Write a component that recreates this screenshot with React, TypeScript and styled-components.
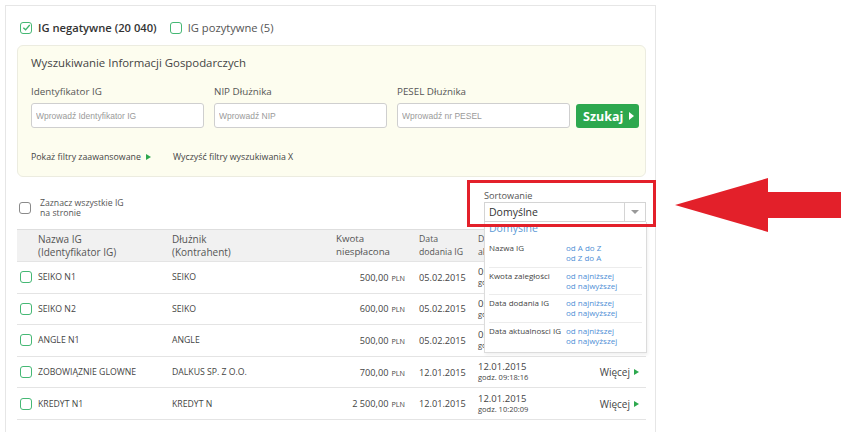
import styled, { createGlobalStyle } from 'styled-components';

const GlobalStyle = createGlobalStyle`
  html, body { margin: 0; padding: 0; background: #fff; }
  body { font-family: 'Open Sans', 'DejaVu Sans', sans-serif; color: #444; }
  * { box-sizing: border-box; }
`;

const Page = styled.div`
  position: relative;
  width: 841px;
  height: 432px;
  overflow: hidden;
  padding: 5px;
`;

const Card = styled.div`
  position: relative;
  width: 651px;
  height: 440px;
  border: 1px solid #e6e6e6;
  padding: 15px 9px 0 11px;
`;

const TypeRow = styled.div`
  display: flex;
  align-items: center;
  height: 13px;
  padding-left: 3px;
  gap: 6px;
`;

const TypeLabel = styled.span<{ $active?: boolean }>`
  font-size: 11.2px;
  font-weight: ${({ $active }) => ($active ? 600 : 400)};
  color: ${({ $active }) => ($active ? '#333' : '#555')};
  margin-right: 7px;
`;

const Box = styled.span<{ $tone?: 'green' | 'gray'; $size?: number }>`
  display: inline-flex;
  align-items: center;
  justify-content: center;
  flex: none;
  width: ${({ $size }) => $size ?? 12}px;
  height: ${({ $size }) => $size ?? 12}px;
  border: 1.5px solid ${({ $tone }) => ($tone === 'gray' ? '#8a8a8a' : '#45b874')};
  border-radius: 3px;
  background: #fff;
`;

const Panel = styled.div`
  margin-top: 11px;
  height: 132px;
  background: #fdfdef;
  border: 1px solid #ecece0;
  border-radius: 6px;
  padding: 8px 6px 0 13px;
`;

const PanelTitle = styled.div`
  font-size: 11.4px;
  color: #444;
  line-height: 18px;
`;

const Fields = styled.div`
  display: flex;
  align-items: flex-end;
  margin-top: 13px;
  gap: 10px;
`;

const Field = styled.div`
  display: flex;
  flex-direction: column;
  gap: 5px;
`;

const FieldLabel = styled.div`
  font-size: 9.8px;
  color: #555;
  line-height: 13px;
`;

const Input = styled.input<{ $w: number }>`
  width: ${({ $w }) => $w}px;
  height: 25px;
  border: 1px solid #cfcfcf;
  border-radius: 3px;
  background: #fff;
  padding: 0 4px;
  font-family: 'Liberation Sans', Arial, sans-serif;
  font-size: 8.5px;
  outline: none;
  &::placeholder { color: #9a9a9a; }
`;

const SearchButton = styled.button`
  display: flex;
  align-items: center;
  gap: 6px;
  height: 24px;
  margin-left: -4px;
  padding: 0 5px 0 7px;
  border: none;
  border-radius: 3px;
  background: #2da84e;
  color: #fff;
  font-family: 'Open Sans', sans-serif;
  font-size: 12.5px;
  font-weight: 700;
`;

const Tri = styled.span<{ $color?: string; $h?: number }>`
  display: inline-block;
  width: 0;
  height: 0;
  border-top: ${({ $h }) => ($h ?? 7) / 2}px solid transparent;
  border-bottom: ${({ $h }) => ($h ?? 7) / 2}px solid transparent;
  border-left: ${({ $h }) => (($h ?? 7) * 5) / 7}px solid ${({ $color }) => $color ?? '#2da84e'};
`;

const Links = styled.div`
  display: flex;
  align-items: center;
  margin-top: 23px;
  font-size: 8.8px;
  color: #444;
`;

const PanelLink = styled.span<{ $w?: number }>`
  display: inline-flex;
  align-items: center;
  gap: 5px;
  width: ${({ $w }) => ($w ? `${$w}px` : 'auto')};
`;

const Toolbar = styled.div`
  display: flex;
  justify-content: space-between;
  align-items: flex-end;
  height: 52px;
  padding: 0 0 4px 2px;
`;

const SelectAll = styled.label`
  display: flex;
  align-items: center;
  gap: 9px;
  margin-bottom: 7px;
  font-size: 8.7px;
  line-height: 10px;
  color: #555;
`;

const Sort = styled.div`
  width: 162px;
  display: flex;
  flex-direction: column;
  margin-bottom: 3px;
`;

const SortLabel = styled.div`
  font-size: 9.2px;
  line-height: 13px;
  color: #555;
`;

const Select = styled.div`
  display: flex;
  align-items: center;
  height: 20px;
  border: 1px solid #d4d4d4;
  background: #fff;
  font-size: 10.5px;
  color: #333;
  padding-left: 4px;
  span { flex: 1; }
`;

const Caret = styled.div`
  width: 21px;
  height: 100%;
  border-left: 1px solid #d4d4d4;
  display: flex;
  align-items: center;
  justify-content: center;
  &::after {
    content: '';
    border-left: 4px solid transparent;
    border-right: 4px solid transparent;
    border-top: 4px solid #999;
  }
`;

const Grid = styled.div<{ $head?: boolean }>`
  display: grid;
  grid-template-columns: 18px 134px 150px 83px 73px 100px 61px;
  align-items: center;
  padding-left: 3px;
  height: ${({ $head }) => ($head ? 33 : 31.6)}px;
  background: ${({ $head }) => ($head ? '#f1f1f1' : '#fff')};
  border-top: ${({ $head }) => ($head ? '1px solid #dedede' : 'none')};
  border-bottom: 1px solid #e4e4e4;
  font-size: 8.7px;
  color: #444;
`;

const HeadCell = styled.div<{ $size?: number; $pad?: number }>`
  font-size: ${({ $size }) => $size ?? 10}px;
  padding-left: ${({ $pad }) => $pad ?? 0}px;
  line-height: 12.5px;
  color: #555;
`;

const Amount = styled.div`
  text-align: right;
  font-size: 9.2px;
  small { font-size: 7.2px; margin-left: 3px; }
`;

const DateCell = styled.div`
  padding-left: 14px;
  font-size: 9.2px;
`;

const Stamp = styled.div`
  font-size: 9.5px;
  line-height: 11px;
  small { display: block; font-size: 7.5px; }
`;

const More = styled.div`
  display: flex;
  justify-content: flex-end;
  align-items: center;
  gap: 4px;
  font-size: 10px;
  color: #444;
`;

const Highlight = styled.div`
  position: absolute;
  left: 461px;
  top: 174px;
  width: 189px;
  height: 47px;
  border: 3px solid #e3202a;
`;

const Menu = styled.div`
  position: absolute;
  left: 478px;
  top: 216px;
  width: 163px;
  height: 131px;
  background: #fff;
  border: 1px solid #dcdcdc;
  border-top: none;
  padding: 0 4px;
  box-shadow: 1px 2px 3px rgba(0, 0, 0, 0.06);
`;

const MenuDefault = styled.div`
  font-size: 10.5px;
  color: #5d9ad6;
  line-height: 12px;
  height: 18px;
`;

const MenuGroup = styled.div`
  display: grid;
  grid-template-columns: 77px 1fr;
  padding: 3px 0 3px;
  border-bottom: 1px solid #ececec;
  font-size: 8px;
  line-height: 10.3px;
  color: #444;
  &:last-child { border-bottom: none; }
`;

const MenuLinks = styled.div`
  display: flex;
  flex-direction: column;
  color: #4f8fd6;
`;

const Arrow = styled.svg`
  position: absolute;
  left: 670px;
  top: 174px;
`;

const Check = () => (
  <svg width="9" height="9" viewBox="0 0 10 10">
    <path d="M1.5 5.2 L4 7.6 L8.6 2.2" fill="none" stroke="#3bb56b" strokeWidth="1.5" />
  </svg>
);

const rows = [
  { name: 'SEIKO N1', debtor: 'SEIKO', amount: '500,00', added: '05.02.2015', upd: '05.02.2015', time: '09:12:40' },
  { name: 'SEIKO N2', debtor: 'SEIKO', amount: '600,00', added: '05.02.2015', upd: '05.02.2015', time: '09:14:02' },
  { name: 'ANGLE N1', debtor: 'ANGLE', amount: '500,00', added: '05.02.2015', upd: '05.02.2015', time: '09:15:51' },
  { name: 'ZOBOWIĄZNIE GLOWNE', debtor: 'DALKUS SP. Z O.O.', amount: '700,00', added: '12.01.2015', upd: '12.01.2015', time: '09:18:16' },
  { name: 'KREDYT N1', debtor: 'KREDYT N', amount: '2 500,00', added: '12.01.2015', upd: '12.01.2015', time: '10:20:09' },
];

const sortGroups = [
  { label: 'Nazwa IG', links: ['od A do Z', 'od Z do A'] },
  { label: 'Kwota zaległości', links: ['od najniższej', 'od najwyższej'] },
  { label: 'Data dodania IG', links: ['od najniższej', 'od najwyższej'] },
  { label: 'Data aktualnosci IG', links: ['od najniższej', 'od najwyższej'] },
];

export default function App() {
  return (
    <>
      <GlobalStyle />
      <Page>
        <Card>
          <TypeRow>
            <Box><Check /></Box>
            <TypeLabel $active>IG negatywne (20 040)</TypeLabel>
            <Box />
            <TypeLabel>IG pozytywne (5)</TypeLabel>
          </TypeRow>

          <Panel>
            <PanelTitle>Wyszukiwanie Informacji Gospodarczych</PanelTitle>
            <Fields>
              <Field>
                <FieldLabel>Identyfikator IG</FieldLabel>
                <Input $w={173} placeholder="Wprowadź Identyfikator IG" />
              </Field>
              <Field>
                <FieldLabel>NIP Dłużnika</FieldLabel>
                <Input $w={173} placeholder="Wprowadź NIP" />
              </Field>
              <Field>
                <FieldLabel>PESEL Dłużnika</FieldLabel>
                <Input $w={173} placeholder="Wprowadź nr PESEL" />
              </Field>
              <SearchButton>
                Szukaj <Tri $color="#fff" $h={8} />
              </SearchButton>
            </Fields>
            <Links>
              <PanelLink $w={142}>
                Pokaż filtry zaawansowane <Tri $h={7} />
              </PanelLink>
              <PanelLink>Wyczyść filtry wyszukiwania X</PanelLink>
            </Links>
          </Panel>

          <Toolbar>
            <SelectAll>
              <Box $tone="gray" />
              <span>
                Zaznacz wszystkie IG
                <br />
                na stronie
              </span>
            </SelectAll>
            <Sort>
              <SortLabel>Sortowanie</SortLabel>
              <Select>
                <span>Domyślne</span>
                <Caret />
              </Select>
            </Sort>
          </Toolbar>

          <Grid $head>
            <span />
            <HeadCell>
              Nazwa IG
              <br />
              (Identyfikator IG)
            </HeadCell>
            <HeadCell>
              Dłużnik
              <br />
              (Kontrahent)
            </HeadCell>
            <HeadCell $size={9.7} $pad={14}>
              Kwota
              <br />
              niespłacona
            </HeadCell>
            <HeadCell $size={8.7} $pad={14}>
              Data
              <br />
              dodania IG
            </HeadCell>
            <HeadCell $size={8.7}>
              Data
              <br />
              aktualizacji IG
            </HeadCell>
            <span />
          </Grid>

          {rows.map((r) => (
            <Grid key={r.name}>
              <Box />
              <div>{r.name}</div>
              <div>{r.debtor}</div>
              <Amount>
                {r.amount}
                <small>PLN</small>
              </Amount>
              <DateCell>{r.added}</DateCell>
              <Stamp>
                {r.upd}
                <small>godz. {r.time}</small>
              </Stamp>
              <More>
                Więcej <Tri $h={7} />
              </More>
            </Grid>
          ))}

          <Menu>
            <MenuDefault>Domyślne</MenuDefault>
            {sortGroups.map((g) => (
              <MenuGroup key={g.label}>
                <div>{g.label}</div>
                <MenuLinks>
                  {g.links.map((l) => (
                    <span key={l}>{l}</span>
                  ))}
                </MenuLinks>
              </MenuGroup>
            ))}
          </Menu>
          <Highlight />
        </Card>

        <Arrow width="171" height="60" viewBox="0 0 171 60">
          <polygon points="5,31 98,4 98,18 171,18 171,44 98,44 98,58" fill="#e3202a" />
        </Arrow>
      </Page>
    </>
  );
}
